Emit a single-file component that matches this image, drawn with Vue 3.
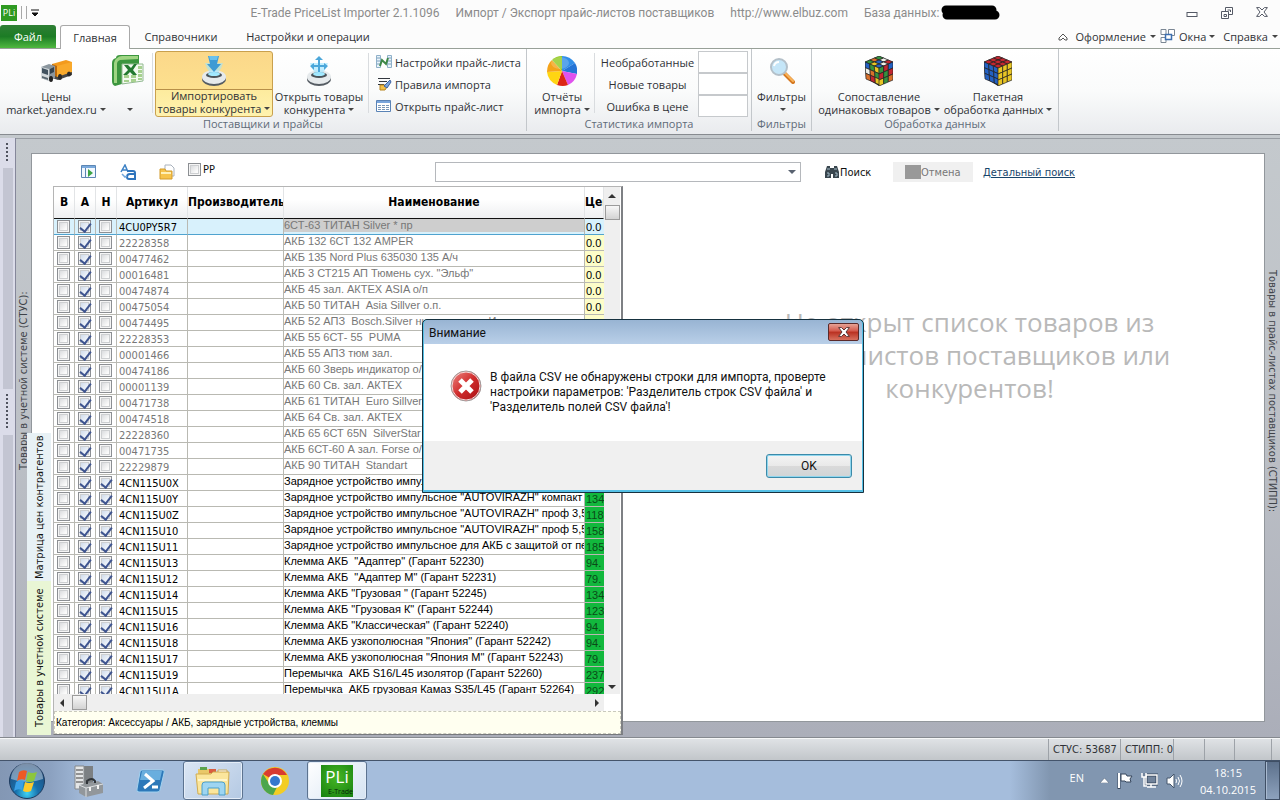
<template>
  <div class="app">
    <header class="titlebar">
      <div class="quick-access">
        <span class="pli-mini">PLi</span>
        <i class="bar"></i>
        <i class="bar"></i>
        <button class="quick-menu" type="button" aria-label="Настройка панели">
          <svg width="8" height="8" viewBox="0 0 8 8"><path d="M0 1h8M1 4h6L4 7z" stroke="#111" fill="#111" /></svg>
        </button>
      </div>
      <h1 class="title">
        <span>E-Trade PriceList Importer 2.1.1096</span>
        <span>Импорт / Экспорт прайс-листов поставщиков</span>
        <span>http://www.elbuz.com</span>
        <span class="database">База данных:
          <svg width="60" height="16" viewBox="0 0 60 16"><path d="M5 5h46M6 10h48" stroke="#000" stroke-width="9" stroke-linecap="round" /></svg>
        </span>
      </h1>
      <div class="window-buttons">
        <button type="button" aria-label="Свернуть">
          <svg width="12" height="12" viewBox="0 0 12 12"><rect x="1" y="5.500" width="10" height="4" fill="#fff" stroke="#555a66" /></svg>
        </button>
        <button type="button" aria-label="Восстановить">
          <svg width="12" height="12" viewBox="0 0 12 12" fill="#fff" stroke="#555a66"><path d="M4.500.5h7v7h-7z" /><path d="M6.500 3h3v2" /><path d="M.5 4.500h7v7h-7z" /><path d="M3 7.500h2.500v2H3z" /></svg>
        </button>
        <button type="button" aria-label="Закрыть">
          <svg width="12" height="10" viewBox="0 0 12 10"><path d="M.6.6h3L6 3l2.400-2.400h3L8 5l3.400 4.400h-3L6 7 3.600 9.400h-3L4 5z" fill="#fff" stroke="#555a66" /></svg>
        </button>
      </div>
    </header>

    <nav class="tabs">
      <button class="tab file" type="button">Файл</button>
      <button class="tab active" type="button">Главная</button>
      <button class="tab" type="button">Справочники</button>
      <button class="tab" type="button">Настройки и операции</button>
      <div class="tabs-right">
        <button type="button" aria-label="Свернуть ленту">
          <svg width="10" height="8" viewBox="0 0 10 8"><path d="M5 1 1 5v2h2l2-2 2 2h2V5z" fill="#fff" stroke="#555" /></svg>
        </button>
        <button type="button">Оформление<i class="caret"></i></button>
        <button type="button" class="windows">
          <svg width="16" height="15" viewBox="0 0 16 15" fill="#fff"><path d="M1 .5h5v5H1zM8.500.5h6v6h-6zM1 8.500h5v5H1z" stroke="#7b8794" /><path d="M5.500 5.500h6v5h-6z" stroke="#3d6fb0" stroke-width="1.500" /></svg>
          Окна<i class="caret"></i>
        </button>
        <button type="button">Справка<i class="caret"></i></button>
      </div>
    </nav>

    <section class="ribbon">
      <div class="group suppliers">
        <div class="group-body">
          <button class="big prices" type="button">
            <svg class="icon" width="32" height="24" viewBox="0 0 32 24">
              <path d="M12 5 26 1l6 2v11l-15 5-5-3z" fill="#f39a1d" /><path d="m12 5 5 2v12l-5-3z" fill="#b9670b" /><path d="m17 7 15-4v11l-15 5z" fill="#f9a92b" />
              <path d="m13 16 4 2 15-5v3l-14 5-6-2z" fill="#474747" />
              <path d="m1 8 8-3 6 2v12l-6 3-8-3z" fill="#8b969e" /><path d="m1 8 8 2v12l-8-3z" fill="#d4dadd" /><path d="m2 9 6 2v5l-6-2z" fill="#41525f" /><path d="m10 10 4-2v5l-4 2z" fill="#34434f" /><path d="m2 17 6 2v2l-6-2z" fill="#596770" />
              <ellipse cx="11" cy="20" rx="2" ry="3" fill="#222" /><ellipse cx="20" cy="18" rx="2" ry="3" fill="#292929" /><ellipse cx="29" cy="15" rx="2" ry="2.500" fill="#292929" />
            </svg>
            <span>Цены<br />market.yandex.ru<i class="caret"></i></span>
          </button>
          <button class="big excel" type="button" aria-label="Excel">
            <svg class="icon" width="32" height="33" viewBox="0 0 32 33">
              <path d="M4 4Q4 1 8 1h19v24L3 32Q0 31 0 27V9Q0 5 4 4z" fill="#3c963f" /><path d="M5 4Q7 2 10 2h16v3L8 6Q5 7 5 10v19H2V9Q2 6 5 4z" fill="#9fd583" />
              <path d="M10 10h21v17l-21 3z" fill="#f4faf1" stroke="#91b991" /><path d="M12 21h5v3h-5zM19 21h5v3h-5zM26 20h4v3h-4zM12 26h5v2h-5zM19 25h5v3h-5zM26 24h4v2h-4zM26 12h4v3h-4zM26 16h4v3h-4z" fill="#a7d18f" />
              <path d="M12 11h4l3 3 3-4h3l-4 6 4 5h-4l-3-3-3 3h-4l5-5z" fill="#247a31" />
            </svg>
            <span><br /><i class="caret"></i></span>
          </button>
          <i class="divider"></i>
          <button class="big import selected" type="button">
            <svg class="icon" width="26" height="32" viewBox="0 0 26 32">
              <ellipse cx="13" cy="24" rx="12" ry="7" fill="#555c63" /><ellipse cx="13" cy="22" rx="12" ry="7" fill="#e6eaec" /><ellipse cx="13" cy="20" rx="8" ry="3" fill="#4b5359" /><ellipse cx="13" cy="19" rx="6" ry="2" fill="#a3eaff" />
              <path d="M4 8q3 10 9 12 6-2 9-12z" fill="#9ce5ff" opacity=".6" /><path d="M7 1h11l-2 8h4l-7 8-7-8h3z" fill="#3f9bd4" /><path d="M8 1h9l-1 4H9z" fill="#6cc1ec" />
            </svg>
            <span>Импортировать<br />товары конкурента<i class="caret"></i></span>
          </button>
          <button class="big open-goods" type="button">
            <svg class="icon" width="26" height="32" viewBox="0 0 26 32">
              <ellipse cx="13" cy="24" rx="12" ry="7" fill="#555c63" /><ellipse cx="13" cy="22" rx="12" ry="7" fill="#e6eaec" /><ellipse cx="13" cy="20" rx="8" ry="3" fill="#4b5359" /><ellipse cx="13" cy="19" rx="6" ry="2" fill="#a3eaff" />
              <path d="M4 8q3 10 9 12 6-2 9-12z" fill="#9ce5ff" opacity=".6" /><path d="m13 1 4 4h-3v5h4V8l4 3-4 4v-3h-4v5h-2v-5H8v3l-4-4 4-3v2h4V5H9z" fill="#4ca7da" />
            </svg>
            <span>Открыть товары<br />конкурента<i class="caret"></i></span>
          </button>
          <i class="divider"></i>
          <div class="small-buttons">
            <button type="button">
              <svg width="16" height="16" viewBox="0 0 16 16"><path d="M.5 1.500h4v12h-4zM11.500 1.500h4v12h-4z" fill="#e9f3fa" stroke="#8fb0c9" /><path d="M1 4h3M1 7h3M1 10h3M12 4h3M12 7h3M12 10h3" stroke="#7ba0bd" /><path d="m4 12 2-6 4 4 2-6" fill="none" stroke="#3d8746" stroke-width="2" /></svg>
              Настройки прайс-листа
            </button>
            <button type="button">
              <svg width="16" height="16" viewBox="0 0 16 16"><path d="M2 2.500h12M3 5.500h8M2 8.500h6" stroke="#33383f" /><path d="M4 9h8l-3 5H4z" fill="#f4c14a" stroke="#b78520" /><path d="m14 4-6 6 3 2 4-6z" fill="#7ca6dd" stroke="#3b62a3" /></svg>
              Правила импорта
            </button>
            <button type="button">
              <svg width="16" height="16" viewBox="0 0 16 16"><path d="M.5 2.500h14v11H.5z" fill="#fff" stroke="#5a83b6" /><path d="M1 3h13v2H1z" fill="#79a5dc" /><path d="M2 7.500h12M2 9.500h12M2 11.500h12" stroke="#7896b8" stroke-dasharray="3 1" /></svg>
              Открыть прайс-лист
            </button>
          </div>
        </div>
        <div class="group-label">Поставщики и прайсы</div>
      </div>

      <div class="group stats">
        <div class="group-body">
          <button class="big reports" type="button">
            <svg class="icon" width="30" height="30" viewBox="0 0 30 30">
              <path d="M15 15V0Q23 0 28 7z" fill="#318ee8" /><path d="M15 15 28 7q3 5 2 11z" fill="#2474d6" /><path d="m15 15 15 3q-2 8-9 11z" fill="#df52ed" /><path d="m15 15 6 14q-5 2-11 0z" fill="#dc2514" /><path d="m15 15-5 14Q1 25 0 16z" fill="#ffd512" /><path d="M15 15 0 16Q0 8 5 4z" fill="#f5a31a" /><path d="M15 15 5 4q4-4 10-4z" fill="#90c91f" />
              <ellipse cx="13" cy="7" rx="9" ry="6" fill="#fff" opacity=".2" />
            </svg>
            <span>Отчёты<br />импорта<i class="caret"></i></span>
          </button>
          <i class="divider"></i>
          <div class="counters">
            <label v-for="name in counters" :key="name"><span>{{ name }}</span><input type="text" /></label>
          </div>
        </div>
        <div class="group-label">Статистика импорта</div>
      </div>

      <div class="group filters">
        <div class="group-body">
          <button class="big" type="button">
            <svg class="icon" width="26" height="26" viewBox="0 0 26 26">
              <path d="m15 15 9 9" stroke="#d57820" stroke-width="4" stroke-linecap="round" /><path d="m16 15 8 8" stroke="#f9b45a" stroke-width="2" stroke-linecap="round" />
              <circle cx="10" cy="9" r="8" fill="#c5e6f8" stroke="#b4c0c9" stroke-width="2" /><path d="M5 8q1-4 5-4" fill="none" stroke="#fff" stroke-width="2" />
            </svg>
            <span>Фильтры<br /><i class="caret"></i></span>
          </button>
        </div>
        <div class="group-label">Фильтры</div>
      </div>

      <div class="group processing">
        <div class="group-body">
          <button v-for="cube in cubes" :key="cube.top" class="big" :class="cube.name" type="button">
            <svg class="icon" width="28" height="30" viewBox="0 0 28 30">
              <path d="M14 0 28 6 27 22 14 30 1 22 0 6z" fill="#252525" />
              <polygon v-for="(tile, i) in cube.tiles" :key="i" :points="tile.points" :fill="tile.color" stroke="#252525" stroke-width=".7" />
            </svg>
            <span>{{ cube.top }}<br />{{ cube.bottom }}<i class="caret"></i></span>
          </button>
        </div>
        <div class="group-label">Обработка данных</div>
      </div>
    </section>

    <main class="workspace">
      <aside class="splitter">
        <i class="grip"></i>
        <i class="segment"></i>
        <i class="grip long"></i>
        <i class="segment wide"></i>
      </aside>
      <aside class="side-label left"><span>Товары в учетной системе (СТУС):</span></aside>

      <div class="content">
        <form class="toolbar" @submit.prevent>
          <div class="tools">
            <button type="button" aria-label="Показать панель">
              <svg width="16" height="14" viewBox="0 0 16 14"><path d="M.5.5h14v12H.5z" fill="#f2f8ff" stroke="#5c86b4" /><path d="M1 1h13v2H1z" fill="#79a9dc" /><path d="M4.500 3v9" stroke="#5c86b4" /><path d="M7 4l5 4-5 4z" fill="#3da346" /></svg>
            </button>
            <button type="button" aria-label="Заменить текст">
              <svg width="16" height="16" viewBox="0 0 16 16"><path d="M1 8 5 1l3 7M2 6h5" fill="none" stroke="#3c81c5" stroke-width="1.500" /><path d="M7 7h6q2 0 2 2v6H9q-2 0-2-2 0-3 3-3h4" fill="none" stroke="#2f75bd" stroke-width="2" /><path d="m2 10 3 3 2-1" fill="none" stroke="#72a7db" stroke-width="1.500" /></svg>
            </button>
            <button type="button" aria-label="Открыть папку">
              <svg width="16" height="16" viewBox="0 0 16 16"><path d="M6 1h6l3 3v8H6z" fill="#fff" stroke="#a9b2bd" /><path d="M1 5h5l1 2h6v8H1z" fill="#f7c44c" stroke="#d39b2a" /><path d="M2 9h10" stroke="#fff1b8" stroke-width="2" /></svg>
            </button>
            <label class="pp"><input v-model="pp" type="checkbox" />РР</label>
          </div>
          <div class="combo">
            <select aria-label="Строка поиска"><option></option></select>
            <i class="caret"></i>
          </div>
          <button class="find" type="submit">
            <svg width="14" height="12" viewBox="0 0 14 12"><path d="M2 0h3v2h4V0h3l2 6v6H8V8H6v4H0V6z" fill="#39464e" /><path d="M2 3h3M9 3h3M2 7h2v3H2M10 7h2v3h-2" fill="none" stroke="#a3bac7" /></svg>Поиск
          </button>
          <button class="cancel" type="button" disabled><i></i>Отмена</button>
          <a class="detail" href="#">Детальный поиск</a>
        </form>

        <div class="panels">
          <div class="side-tabs">
            <button class="matrix" type="button">Матрица цен контрагентов</button>
            <button class="goods" type="button">Товары в учетной системе</button>
          </div>

          <section class="goods-panel">
            <div class="grid-area">
              <div class="grid-clip">
                <table>
                  <colgroup>
                    <col class="c-check" /><col class="c-check" /><col class="c-check" />
                    <col class="c-code" /><col class="c-maker" /><col class="c-name" /><col class="c-price" />
                  </colgroup>
                  <thead>
                    <tr>
                      <th>В</th>
                      <th>А</th>
                      <th>Н</th>
                      <th>Артикул</th>
                      <th>Производитель</th>
                      <th>Наименование</th>
                      <th class="cut">Цен</th>
                    </tr>
                  </thead>
                  <tbody>
                    <tr v-for="(row, i) in rows" :key="row.code" :class="{ old: i < 16, current: i === 0 }">
                      <td class="check"><input type="checkbox" :aria-label="'В ' + row.code" /></td>
                      <td class="check"><input type="checkbox" checked :aria-label="'А ' + row.code" /></td>
                      <td class="check"><input type="checkbox" :checked="i > 15" :aria-label="'Н ' + row.code" /></td>
                      <td class="code">{{ row.code }}</td>
                      <td></td>
                      <td class="name"><span>{{ row.name }}</span></td>
                      <td class="price">{{ row.price }}</td>
                    </tr>
                  </tbody>
                </table>
              </div>
              <div class="scroll vertical">
                <i class="arrow up"></i>
                <i class="thumb"></i>
                <i class="arrow down"></i>
              </div>
            </div>
            <div class="scroll horizontal">
              <i class="arrow prev"></i>
              <i class="thumb"></i>
              <i class="arrow next"></i>
            </div>
            <p class="category">Категория: Аксессуары / АКБ, зарядные устройства, клеммы</p>
          </section>

          <section class="placeholder">
            <p>Не открыт список товаров из<br />прайс-листов поставщиков или<br />конкурентов!</p>
          </section>
        </div>
      </div>

      <aside class="side-label right"><span>Товары в прайс-листах поставщиков (СТИПП):</span></aside>
    </main>

    <footer class="statusbar">
      <span class="stus">СТУС: 53687</span>
      <span class="stipp">СТИПП: 0</span>
      <span></span>
      <span></span>
      <span class="last"></span>
    </footer>

    <footer class="taskbar">
      <button class="start" type="button" aria-label="Пуск">
        <svg width="38" height="38" viewBox="0 0 38 38">
          <defs>
            <radialGradient id="orb" cx=".5" cy=".85" r=".8"><stop offset="0" stop-color="#3fd3f5" /><stop offset=".4" stop-color="#1770ac" /><stop offset="1" stop-color="#234a78" /></radialGradient>
          </defs>
          <circle cx="19" cy="19" r="17.500" fill="url(#orb)" stroke="#1d3a5e" /><path d="M3 17a16 16 0 0 1 32 0q-16 6-32 0z" fill="#fff" opacity=".4" />
          <path d="M11 10q4-3 8-1l-2 9q-4-2-8 1z" fill="#ee5a24" /><path d="M20 10q4 2 9 0l-3 9q-4 2-8 0z" fill="#8cc63e" /><path d="M8 20q4-3 8-1l-2 9q-4-2-8 1z" fill="#3aa0e6" /><path d="M17 20q4 2 9 0l-3 9q-4 2-8 0z" fill="#fdca2c" />
        </svg>
      </button>
      <button class="task" type="button" aria-label="Диспетчер сервера">
        <svg width="30" height="32" viewBox="0 0 30 32"><path d="M10 1h9v20h-9z" fill="#7c8083" /><path d="M1 1h9v23H1z" fill="#e4e6e7" stroke="#85898c" /><path d="M2 5h7M2 9h7M2 13h7M2 17h7" stroke="#777" stroke-width="1.500" /><path d="m5 20 19-4 5 3v9l-17 4-7-4z" fill="#92979b" /><path d="m5 20 7 3 17-4M12 23v9" stroke="#dde0e2" fill="none" /><path d="M13 19v-3q5-4 8 0v2" fill="none" stroke="#303438" stroke-width="2" /><path d="M15 22h2v4h-2zM23 20h2v4h-2z" fill="#f3f3f3" /></svg>
      </button>
      <button class="task" type="button" aria-label="PowerShell">
        <svg width="30" height="24" viewBox="0 0 30 24"><path d="M6 1h21q2 0 1 3l-4 17q0 2-3 2H3q-3 0-2-3L4 3q0-2 2-2z" fill="#2c78b9" stroke="#a3d2ef" /><path d="M6 2h20l-2 9H4z" fill="#69aede" /><path d="m9 5 8 7-9 7M16 18h6" fill="none" stroke="#fff" stroke-width="3" /></svg>
      </button>
      <button class="task open" type="button" aria-label="Проводник">
        <svg width="36" height="32" viewBox="0 0 36 32"><path d="M3 4h12l2 3h16v22H3z" fill="#e9c869" /><path d="M5 2h7v3H5z" fill="#5ba34e" /><path d="M14 4h7v4h-7z" fill="#d85d3f" /><path d="M23 5h9v4h-9z" fill="#fff" stroke="#caa856" /><path d="M1 9h15l2-2h16l-1 22H3z" fill="#fbe69c" stroke="#d1ac50" /><path d="M3 15h29" stroke="#fff6cc" stroke-width="2" /><path d="M7 30V20q0-3 3-3h17q3 0 3 3v10h-6v-7H13v7z" fill="#9ed5f1" stroke="#4b9fca" /></svg>
      </button>
      <button class="task" type="button" aria-label="Chrome">
        <svg width="28" height="28" viewBox="0 0 28 28"><circle cx="14" cy="14" r="14" fill="#f3cd24" /><path d="M14 14 2 7a14 14 0 0 1 24 1H14z" fill="#d93b30" /><path d="M2 7l7 11h8l-5 10A14 14 0 0 1 2 7z" fill="#4ca64d" /><circle cx="14" cy="14" r="7" fill="#fff" /><circle cx="14" cy="14" r="5" fill="#3578cd" /></svg>
      </button>
      <button class="task open bright" type="button" aria-label="E-Trade PriceList Importer">
        <span class="pli-logo"><b>PLi</b><small>E-Trade</small></span>
      </button>
      <div class="tray">
        <span class="lang">EN</span>
        <svg width="9" height="5" viewBox="0 0 9 5"><path d="m0 5 4.500-5L9 5z" fill="#fff" stroke="#4c5d73" stroke-width=".5" /></svg>
        <svg width="16" height="17" viewBox="0 0 16 17"><path d="M2 1v16" stroke="#36465c" stroke-width="3" /><path d="M2 1v15" stroke="#fff" stroke-width="2" /><path d="M4 2h5l1 2h5l-2 3 1 3H9L8 9H4z" fill="#fff" stroke="#36465c" /></svg>
        <svg width="17" height="17" viewBox="0 0 17 17"><path d="M5 3h11v9H5z" fill="#71839b" stroke="#36465c" stroke-width="3" /><path d="M5 3h11v9H5zM10 12v3M6 15h9M3 5v9h3" fill="none" stroke="#fff" stroke-width="1.500" /><path d="M1 1v4h4V1" fill="#71839b" stroke="#fff" stroke-width="1.500" /></svg>
        <svg width="17" height="16" viewBox="0 0 17 16"><path d="M1 5h3l4-4v14l-4-4H1z" fill="#fff" stroke="#45566c" /><path d="M10 6q1 2 0 4M12 4q3 4 0 8M14 2q4 6 0 12" fill="none" stroke="#fff" /></svg>
        <time class="clock">18:15<br />04.10.2015</time>
      </div>
      <button class="show-desktop" type="button" aria-label="Показать рабочий стол"></button>
    </footer>

    <div class="message" role="dialog" aria-labelledby="message-title">
      <header>
        <h2 id="message-title">Внимание</h2>
        <button type="button" aria-label="Закрыть">
          <svg width="12" height="10" viewBox="0 0 12 10"><path d="M.6.6h3L6 3l2.400-2.400h3L8 5l3.400 4.400h-3L6 7 3.600 9.400h-3L4 5z" fill="#fff" stroke="#5b3434" /></svg>
        </button>
      </header>
      <div class="message-body">
        <svg width="32" height="32" viewBox="0 0 32 32">
          <defs>
            <linearGradient id="err" x2="1" y2="1"><stop offset="0" stop-color="#f08b86" /><stop offset=".5" stop-color="#cf2b2b" /><stop offset="1" stop-color="#a50d12" /></linearGradient>
          </defs>
          <circle cx="16" cy="16" r="15" fill="url(#err)" stroke="#9f9f9f" /><circle cx="16" cy="16" r="14" fill="none" stroke="#f3dada" />
          <path d="m10 10 12 12M22 10 10 22" stroke="#fff" stroke-width="5" />
        </svg>
        <p>В файла CSV не обнаружены строки для импорта, проверте<br />настройки параметров: 'Разделитель строк CSV файла' и<br />'Разделитель полей CSV файла'!</p>
      </div>
      <footer><button type="button">OK</button></footer>
    </div>
  </div>
</template>

<script setup>
import { ref } from 'vue'

const pp = ref(false)
const counters = ['Необработанные', 'Новые товары', 'Ошибка в цене']

const rows = [
  ['4CU0PY5R7', '6СТ-63 ТИТАН Silver * пр', '0.0'],
  ['22228358', 'АКБ 132 6СТ 132 AMPER', '0.0'],
  ['00477462', 'АКБ 135 Nord Plus 635030 135 А/ч', '0.0'],
  ['00016481', 'АКБ 3 СТ215 АП Тюмень сух. "Эльф"', '0.0'],
  ['00474874', 'АКБ 45 зал. АКТЕХ ASIA о/п', '0.0'],
  ['00475054', 'АКБ 50 ТИТАН  Asia Sillver о.п.', '0.0'],
  ['00474495', 'АКБ 52 АПЗ  Bosch.Silver низкая клемм И', '0.0'],
  ['22228353', 'АКБ 55 6СТ- 55  PUMA', '0.0'],
  ['00001466', 'АКБ 55 АПЗ тюм зал.', '0.0'],
  ['00474186', 'АКБ 60 Зверь индикатор о/п', '0.0'],
  ['00001139', 'АКБ 60 Св. зал. АКТЕХ', '0.0'],
  ['00471738', 'АКБ 61 ТИТАН  Euro Sillver', '0.0'],
  ['00474518', 'АКБ 64 Св. зал. АКТЕХ', '0.0'],
  ['22228360', 'АКБ 65 6СТ 65N  SilverStar', '0.0'],
  ['00471735', 'АКБ 6СТ-60 А зал. Forse о/п', '0.0'],
  ['22229879', 'АКБ 90 ТИТАН  Standart', '0.0'],
  ['4CN115U0X', 'Зарядное устройство импульсное', '134'],
  ['4CN115U0Y', 'Зарядное устройство импульсное "AUTOVIRAZH" компакт 0', '134'],
  ['4CN115U0Z', 'Зарядное устройство импульсное "AUTOVIRAZH" проф 3,5А', '118'],
  ['4CN115U10', 'Зарядное устройство импульсное "AUTOVIRAZH" проф 5,5А', '158'],
  ['4CN115U11', 'Зарядное устройство импульсное для АКБ с защитой от пе', '185'],
  ['4CN115U13', 'Клемма АКБ  "Адаптер" (Гарант 52230)', '94.'],
  ['4CN115U12', 'Клемма АКБ  "Адаптер М" (Гарант 52231)', '79.'],
  ['4CN115U14', 'Клемма АКБ "Грузовая " (Гарант 52245)', '134'],
  ['4CN115U15', 'Клемма АКБ "Грузовая К" (Гарант 52244)', '123'],
  ['4CN115U16', 'Клемма АКБ "Классическая" (Гарант 52240)', '94.'],
  ['4CN115U18', 'Клемма АКБ узкополюсная "Япония" (Гарант 52242)', '94.'],
  ['4CN115U17', 'Клемма АКБ узкополюсная "Япония М" (Гарант 52243)', '79.'],
  ['4CN115U19', 'Перемычка  АКБ S16/L45 изолятор (Гарант 52260)', '237'],
  ['4CN115U1A', 'Перемычка  АКБ грузовая Камаз S35/L45 (Гарант 52264)', '292'],
].map(([code, name, price]) => ({ code, name, price }))

// each face: origin corner and two edge vectors
const faces = [
  [[14, 0], [14, 6], [-14, 6]],
  [[0, 6], [14, 6], [1, 17]],
  [[14, 12], [14, -6], [0, 18]],
]

function cubeTiles(colors) {
  return faces.flatMap(([o, u, v], f) =>
    Array.from({ length: 9 }, (_, n) => {
      const a = (n % 3) / 3
      const b = Math.floor(n / 3) / 3
      const corners = [[a, b], [a + 1 / 3, b], [a + 1 / 3, b + 1 / 3], [a, b + 1 / 3]]
      const points = corners
        .map(([s, t]) => [o[0] + u[0] * s + v[0] * t, o[1] + u[1] * s + v[1] * t].map((c) => c.toFixed(1)).join(','))
        .join(' ')
      return { points, color: colors[f][n] }
    })
  )
}

const [r, g, b, y, o, w] = ['#c22630', '#35923e', '#2361c4', '#e8c524', '#d9702a', '#f1f1ea']

const cubes = [
  {
    name: 'match',
    top: 'Сопоставление',
    bottom: 'одинаковых товаров',
    tiles: cubeTiles([
      [g, w, r, o, b, w, g, y, b],
      [b, g, y, w, o, g, o, r, y],
      [g, r, b, r, g, r, y, g, o],
    ]),
  },
  {
    name: 'batch',
    top: 'Пакетная',
    bottom: 'обработка данных',
    tiles: cubeTiles([Array(9).fill(r), Array(9).fill(b), Array(9).fill(y)]),
  },
]
</script>

<style>
body {
  margin: 0;
  overflow: hidden;
}
</style>

<style scoped>
.app {
  --ui: "Open Sans", "Noto Sans", sans-serif;
  --dialog: Roboto, "Open Sans", sans-serif;
  --grid: "DejaVu Sans Condensed", "Noto Sans", sans-serif;
  position: relative;
  display: flex;
  flex-direction: column;
  height: 100vh;
  font-family: var(--ui);
  font-size: 11px;
  color: #2f3236;
  background: #fcfcfc;
}

.app * {
  box-sizing: border-box;
}

button,
input,
select {
  margin: 0;
  padding: 0;
  border: 0;
  background: none;
  font: inherit;
  color: inherit;
}

svg {
  flex: none;
}

.caret {
  display: inline-block;
  margin-left: 4px;
  vertical-align: 3px;
  border: 3px solid transparent;
  border-top: 3px solid #444;
  border-bottom: 0;
}

/* title bar */
.titlebar {
  display: flex;
  align-items: center;
  height: 25px;
}

.quick-access {
  display: flex;
  align-items: center;
  gap: 4px;
  width: 66px;
  padding-left: 1px;
}

.pli-mini {
  width: 16px;
  height: 16px;
  background: #2f9a22;
  color: #fff;
  font-size: 9px;
  line-height: 16px;
  text-align: center;
}

.bar {
  width: 1px;
  height: 13px;
  background: #a8a8a8;
}

.quick-menu {
  display: flex;
}

.title {
  flex: 1;
  display: flex;
  justify-content: center;
  gap: 16px;
  margin: 0;
  font-family: var(--dialog);
  font-size: 12px;
  font-weight: 400;
  line-height: 16px;
  color: #8b8b8b;
  white-space: nowrap;
}

.database {
  display: flex;
  gap: 2px;
}

.window-buttons {
  display: flex;
  justify-content: space-between;
  width: 94px;
  padding-right: 12px;
}

.window-buttons button {
  display: flex;
}

/* tabs */
.tabs {
  display: flex;
  align-items: stretch;
  height: 24px;
  border-bottom: 1px solid #98a098;
}

.tab {
  width: 138px;
}

.tab:nth-child(4) {
  width: 156px;
  margin-left: -20px;
}

.tab.file {
  width: 56px;
  border-radius: 3px 3px 0 0;
  background: linear-gradient(#2f7f35, #1c7c25 50%, #4fb83f);
  color: #fff;
}

.tab.active {
  width: 70px;
  height: 24px;
  margin-left: 4px;
  margin-right: -18px;
  border: 1px solid #a9a9a9;
  border-bottom: 0;
  border-radius: 3px 3px 0 0;
  background: #fff;
}

.tabs-right {
  display: flex;
  align-items: center;
  gap: 8px;
  margin-left: auto;
  padding-right: 2px;
  white-space: nowrap;
}

.tabs-right button {
  display: flex;
  align-items: center;
}

.tabs-right .windows {
  gap: 3px;
  margin-left: -4px;
}

.windows .caret {
  margin-left: 0;
}

/* ribbon */
.ribbon {
  display: flex;
  height: 86px;
  padding-bottom: 3px;
  border-bottom: 1px solid #878b90;
  background: linear-gradient(#fff, #fafbfb 50%, #e9ebee);
}

.group {
  display: flex;
  flex-direction: column;
  border-right: 1px solid #c3c7cb;
  flex: none;
}

.suppliers {
  width: 527px;
}

.stats {
  width: 225px;
}

.filters {
  width: 60px;
}

.processing {
  width: 247px;
}

.group-body {
  display: flex;
  height: 69px;
  padding-top: 2px;
}

.group-label {
  line-height: 14px;
  text-align: center;
  color: #606b78;
}

.big {
  display: flex;
  flex-direction: column;
  flex: none;
  width: 100%;
  height: 66px;
  line-height: 13px;
  white-space: nowrap;
  align-items: center;
}

.big .icon {
  margin: auto;
}

.big span {
  height: 27px;
  display: block;
}

.prices {
  width: 112px;
}

.excel {
  width: 32px;
}

.import {
  width: 118px;
}

.open-goods {
  width: 92px;
}

.reports {
  width: 70px;
}

.match {
  width: 134px;
}

.batch {
  width: 104px;
}

.big .caret {
  margin-left: 3px;
}

.selected {
  border: 1px solid #c9a04d;
  border-radius: 3px;
  background: linear-gradient(#fbd88a, #fde08e 37px, #b88f48 37px, #b88f48 38px, #fdeb9e 38px, #fff2ae);
}

.divider {
  width: 1px;
  margin: 2px 2px 4px 8px;
  background: #d9dcdf;
}

.open-goods + .divider {
  margin-left: 3px;
}

.stats .divider {
  margin-left: -3px;
}

.small-buttons {
  display: flex;
  flex-direction: column;
  padding-left: 5px;
}

.small-buttons button {
  display: flex;
  align-items: center;
  gap: 3px;
  height: 22px;
  white-space: nowrap;
}

.counters label {
  display: flex;
  align-items: center;
  height: 22px;
}

.counters span {
  width: 101px;
  text-align: center;
  white-space: nowrap;
}

.counters input {
  width: 50px;
  height: 22px;
  border: 1px solid #c6c9cc;
  background: #fff;
}

/* workspace */
.workspace {
  flex: 1;
  display: flex;
  min-height: 0;
  padding-top: 3px;
  background: linear-gradient(transparent 3px, #989da3 3px, #989da3 4px, transparent 4px), linear-gradient(#c4c9cd, #bcc0c6 50%, #abaeb9);
  border-bottom: 1px solid #85898f;
  font-family: var(--grid);
  font-size: 11px;
  line-height: 13px;
}

.splitter {
  display: flex;
  flex-direction: column;
  width: 16px;
  padding: 0 2px 0 3px;
  border-right: 1px solid #85879a;
  background: #dbdce9;
}

.grip {
  width: 2px;
  height: 20px;
  margin: 5px 3px;
  background: repeating-linear-gradient(#50535f 0 2px, transparent 2px 4px);
}

.grip.long {
  height: 36px;
}

.segment {
  flex: 22;
  background: #c3c5d2;
}

.segment.wide {
  flex: 30;
}

.side-label {
  width: 15px;
  writing-mode: vertical-rl;
  white-space: nowrap;
  text-align: center;
  line-height: 15px;
  color: #3e4248;
}

.side-label.left {
  transform: rotate(180deg);
  padding-top: 113px;
}

.side-label.right {
  padding-bottom: 93px;
}

.content {
  flex: 1;
  min-width: 0;
  display: flex;
  flex-direction: column;
  margin: 15px 0 15px;
  border: 1px solid #92979c;
  background: #fff;
}

.toolbar {
  display: flex;
  align-items: center;
  flex: none;
  height: 32px;
  padding-top: 4px;
  color: #111;
}

.tools {
  display: flex;
  align-items: center;
  width: 403px;
  padding-left: 49px;
}

.tools button {
  display: flex;
  width: 39px;
}

.pp {
  display: flex;
  align-items: center;
  gap: 2px;
  margin: -5px 0 0 -10px;
}

input[type="checkbox"] {
  appearance: none;
  display: block;
  width: 13px;
  height: 13px;
  border: 1px solid #8c8f93;
  background: linear-gradient(135deg, #cfd1d4, #fbfbfb 70%);
  box-shadow: inset 0 0 0 1px #f5f5f5, inset 0 0 0 2px #cdcfd1;
}

input[type="checkbox"]:checked {
  background: linear-gradient(135deg, #c4d2e6, #f3f7fc 70%);
}

input[type="checkbox"]:checked::before {
  content: "";
  display: block;
  width: 5px;
  height: 9px;
  margin: 0 0 0 3px;
  border: solid #3f5590;
  border-width: 0 2px 2px 0;
  transform: rotate(38deg);
}

.combo {
  position: relative;
  width: 366px;
  height: 20px;
}

.combo select {
  appearance: none;
  width: 100%;
  height: 20px;
  border: 1px solid #b5b8bc;
  background: #fff;
}

.combo .caret {
  position: absolute;
  right: 5px;
  top: 8px;
  border-width: 4px 4px 0;
  border-top-color: #596270;
  pointer-events: none;
}

.find {
  display: flex;
  align-items: center;
  gap: 1px;
  width: 92px;
  padding-left: 24px;
}

.cancel {
  display: flex;
  align-items: center;
  width: 80px;
  height: 20px;
  padding-left: 12px;
  background: #f0f0f0;
  color: #777;
}

.cancel i {
  width: 16px;
  height: 14px;
  background: #999;
}

.detail {
  margin-left: 10px;
  color: #17456b;
}

.panels {
  flex: 1;
  display: flex;
  min-height: 0;
}

.side-tabs {
  display: flex;
  flex-direction: column;
  justify-content: flex-end;
  width: 26px;
  margin: 0 0 -14px -5px;
  flex: none;
}

.side-tabs button {
  width: 24px;
  writing-mode: vertical-rl;
  transform: rotate(180deg);
  white-space: nowrap;
  color: #111;
}

.side-tabs .matrix {
  height: 148px;
  background: #e8f1f5;
}

.side-tabs .goods {
  height: 154px;
  background: #e9f6d5;
}

.goods-panel {
  position: relative;
  display: flex;
  flex-direction: column;
  flex: none;
  width: 570px;
  margin-bottom: -14px;
  border: 1px solid #b5b5b5;
  border-right: 2px solid #7e8084;
  border-bottom-color: #77797d;
  background: #fff;
}

.grid-area {
  flex: 1;
  display: flex;
  min-height: 0;
}

.grid-clip {
  width: 550px;
  overflow: hidden;
}

table {
  width: 550px;
  table-layout: fixed;
  border-collapse: separate;
  border-spacing: 0;
  color: #000;
}

.c-check {
  width: 21px;
}

.c-code {
  width: 71px;
}

.c-maker {
  width: 96px;
}

.c-name {
  width: 301px;
}

.c-price {
  width: 19px;
}

th {
  height: 32px;
  padding: 0;
  border-right: 1px solid #e2e4e6;
  border-bottom: 1px solid #111;
  background: linear-gradient(#fff 40%, #eeeff1);
  font-size: 12px;
  white-space: nowrap;
  overflow: hidden;
}

th.cut {
  text-align: left;
}

td {
  height: 16px;
  padding: 0;
  border-right: 1px solid #b9b9b2;
  border-bottom: 1px solid #b9b9b2;
  line-height: 13px;
  white-space: pre;
  overflow: hidden;
}

td.check {
  padding-left: 3px;
}

td.code {
  padding: 2px 0 0 2px;
}

td.name {
  vertical-align: top;
  font-family: "Liberation Sans", sans-serif;
}

td.name span {
  display: block;
  height: 13px;
  line-height: 13px;
}

td.price {
  padding: 2px 0 0 1px;
  border-right: 0;
  background: #12b83d;
  font-family: "Liberation Sans", sans-serif;
  color: #0b4a18;
}

.old .code,
.old .name {
  color: #777;
}

.old .price {
  background: #fdfdc9;
  color: #000;
}

.current td,
.current .price {
  border-bottom-color: #4fa3cf;
  background: #d8f1fc;
}

.current .code {
  color: #000;
}

.current .name span {
  background: #cecece;
}

.scroll {
  display: flex;
  align-items: center;
  background: #efefef;
}

.vertical {
  flex-direction: column;
  width: 16px;
  padding: 7px 0 5px;
}

.horizontal {
  flex: none;
  width: 550px;
  height: 17px;
  padding: 0 5px 0 6px;
}

.arrow {
  border: 4px solid transparent;
}

.up {
  border-top: 0;
  border-bottom-color: #333;
}

.down {
  margin-top: auto;
  border-bottom: 0;
  border-top-color: #333;
}

.prev {
  border-left: 0;
  border-right-color: #333;
}

.next {
  margin-left: auto;
  border-right: 0;
  border-left-color: #333;
}

.thumb {
  width: 15px;
  height: 15px;
  border: 1px solid #9b9b9b;
  background: linear-gradient(#f7f7f7, #d3d3d3);
}

.vertical .thumb {
  margin-top: 7px;
}

.horizontal .thumb {
  margin-left: 8px;
}

.category {
  flex: none;
  height: 23px;
  margin: 0;
  padding-left: 1px;
  border: 1px dashed #c9c9bd;
  background: #fffff0;
  font-family: "Liberation Sans", sans-serif;
  font-size: 10px;
  line-height: 22px;
  color: #000;
}

.placeholder {
  flex: 1;
  min-width: 0;
  padding: 120px 0 0 52px;
  overflow: hidden;
}

.placeholder p {
  margin: 0;
  font-family: var(--ui);
  font-size: 26px;
  line-height: 33px;
  text-align: center;
  white-space: nowrap;
  color: #b9b9b9;
}

/* bottom bars */
.statusbar {
  display: flex;
  justify-content: flex-end;
  flex: none;
  height: 22px;
  padding-right: 8px;
  border-top: 1px solid #f6f7f8;
  background: linear-gradient(#dfe2e5, #c2c6ca);
  font-family: var(--grid);
  line-height: 22px;
}

.statusbar span {
  width: 30px;
  padding-left: 4px;
  border-left: 1px solid #9da2a8;
  white-space: nowrap;
}

.statusbar .stus {
  width: 72px;
}

.statusbar .stipp {
  width: 54px;
  border-right: 1px solid #9da2a8;
}

.statusbar .stipp + span {
  border-left: 0;
}

.statusbar .last {
  width: 38px;
  border-right: 1px solid #9da2a8;
}

.taskbar {
  display: flex;
  flex: none;
  height: 40px;
  border-top: 1px solid #44546b;
  background: linear-gradient(90deg, #8397b4, #8ba1c0 50px, #a5bddc 90px, #a5bddc 1010px, #8196b0 1050px);
  color: #fff;
}

.start {
  width: 59px;
  padding-left: 8px;
  display: flex;
  align-items: center;
}

.task {
  display: flex;
  align-items: center;
  justify-content: center;
  width: 60px;
  height: 39px;
  margin-right: 2px;
  border-radius: 3px;
}

.open {
  border: 1px solid #5c7390;
  background: linear-gradient(135deg, #dbe6f4, #b4c9e3);
  box-shadow: inset 0 0 0 1px #e4edf8;
}

.bright {
  background: linear-gradient(135deg, #fff, #d5e3f2);
}

.pli-logo {
  display: flex;
  flex-direction: column;
  width: 32px;
  height: 32px;
  background: radial-gradient(circle at 50% 40%, #45b524, #17810f);
}

.pli-logo b {
  font-size: 17px;
  font-weight: 400;
  line-height: 23px;
}

.pli-logo small {
  font-size: 7px;
  line-height: 7px;
  text-align: right;
  color: #06250a;
}

.tray {
  display: flex;
  align-items: center;
  gap: 8px;
  margin-left: auto;
}

.lang {
  margin: -6px 8px 0 0;
}

.clock {
  width: 74px;
  line-height: 17px;
  text-align: center;
}

.show-desktop {
  width: 15px;
  border: 1px solid #3f4f65;
  background: linear-gradient(#5d718c, #8da2bd);
  box-shadow: inset 1px 0 #a9bad0;
}

/* message window */
.message {
  position: absolute;
  left: 422px;
  top: 319px;
  width: 442px;
  border: 1px solid #16313f;
  border-radius: 5px 5px 0 0;
  background: #55c0e6;
  padding: 0 1px 2px;
  font-family: var(--dialog);
  font-size: 12px;
  color: #111;
}

.message header {
  display: flex;
  justify-content: space-between;
  height: 24px;
  padding: 3px 3px 0 5px;
  border-radius: 4px 4px 0 0;
  background: linear-gradient(#98b4d3, #b9cfe8);
}

.message h2 {
  margin: 0;
  font-size: 12px;
  font-weight: 400;
  line-height: 20px;
}

.message header button {
  display: flex;
  align-items: center;
  justify-content: center;
  width: 31px;
  height: 18px;
  border: 1px solid #5b2a2a;
  border-radius: 2px;
  background: linear-gradient(#e6a295, #d3574a 45%, #b92f20 50%, #d7705e);
}

.message-body {
  display: flex;
  gap: 8px;
  height: 97px;
  padding: 26px 0 0 26px;
  background: #fff;
}

.message p {
  margin: 0;
  line-height: 15px;
  white-space: nowrap;
}

.message footer {
  height: 49px;
  padding: 13px 10px 0;
  background: #f0f0f0;
  text-align: right;
}

.message footer button {
  width: 86px;
  height: 24px;
  border: 1px solid #3c8aa9;
  border-radius: 3px;
  background: linear-gradient(#f4f4f4, #e9e9e9 50%, #dadada 50%, #d0d4d6);
  box-shadow: inset 0 0 0 1px #8fd6ee;
  text-align: center;
}
</style>
